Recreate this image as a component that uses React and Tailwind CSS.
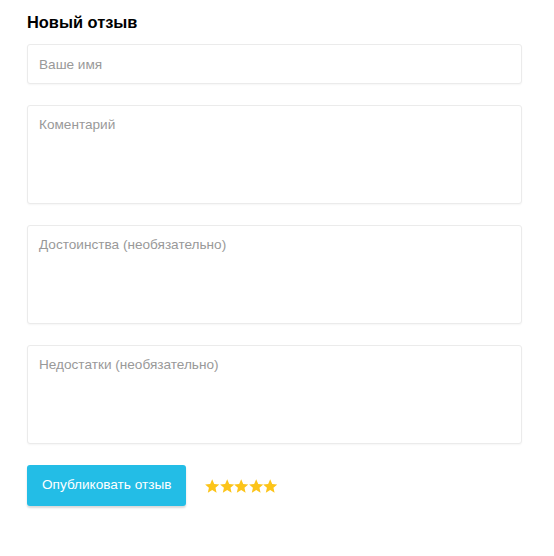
import React from 'react';

const fieldClass =
  "w-full rounded-[3px] border border-[#ebebeb] bg-white px-[11px] text-[13.6px] text-[#333] placeholder:text-[#999] shadow-[0_1px_2px_rgba(0,0,0,0.04)] outline-none";

const Star = () => (
  <svg width="14.4" height="14" viewBox="1 1.2 22 21" className="block">
    <path
      d="M12 1.5l3.1 7.1 7.7.7-5.8 5.1 1.7 7.6L12 18l-6.7 4 1.7-7.6L1.2 9.3l7.7-.7z"
      fill="#fcc419"
    />
  </svg>
);

const App = () => {
  return (
    <div className="min-h-[556px] bg-white px-[27px] pt-[12px] font-['Liberation_Sans',Arial,sans-serif]">
      <h2 className="text-[16.4px] font-bold leading-[20px] text-black">
        Новый отзыв
      </h2>
      <form className="mt-[12px] flex w-[495px] flex-col gap-[21px]">
        <input type="text" placeholder="Ваше имя" className={fieldClass + " h-[40px]"} />
        <textarea placeholder="Коментарий" className={fieldClass + " h-[99px] resize-none pt-[9px]"} />
        <textarea
          placeholder="Достоинства (необязательно)"
          className={fieldClass + " h-[99px] resize-none pt-[9px]"}
        />
        <textarea
          placeholder="Недостатки (необязательно)"
          className={fieldClass + " h-[99px] resize-none pt-[9px]"}
        />
        <div className="flex items-center gap-[19px]">
          <button
            type="button"
            className="h-[41px] rounded-[3px] bg-[#23bde6] px-[15px] text-[13.6px] text-white shadow-[0_2px_2px_rgba(0,0,0,0.15)]"
          >
            Опубликовать отзыв
          </button>
          <div className="flex">
            <Star />
            <Star />
            <Star />
            <Star />
            <Star />
          </div>
        </div>
      </form>
    </div>
  );
};

export default App;
